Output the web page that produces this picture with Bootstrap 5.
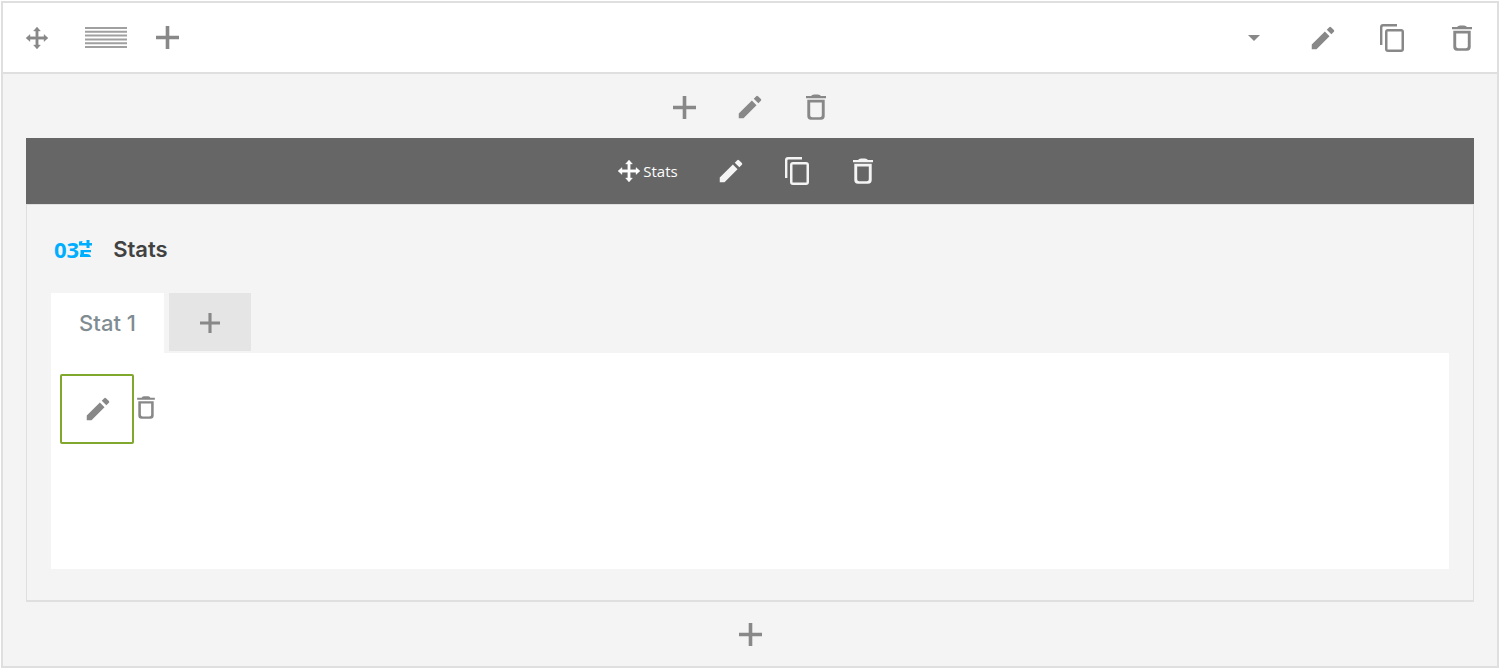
<!DOCTYPE html>
<html lang="en">
<head>
<meta charset="utf-8">
<meta name="viewport" content="width=device-width, initial-scale=1">
<title>Stats module</title>
<link href="https://cdn.jsdelivr.net/npm/bootstrap@5.3.0/dist/css/bootstrap.min.css" rel="stylesheet">
<style>
  body { background: #fff; font-family: Inter, "Liberation Sans", sans-serif; font-size: 22px; }
  .builder-row { margin: 1px; border: 2px solid #dfdfdf; background: #f4f4f4; color: #888; }
  .row-bar { height: 71px; border-bottom: 2px solid #dfdfdf; background: #fff; }
  .tool { display: flex; align-items: center; justify-content: center; width: 66px; height: 64px;
          padding: 0; border: 0; background: none; color: inherit; }
  .tool svg { display: block; fill: currentColor; }
  .tool-move { width: 68px; }
  .tool-end { width: 70px; }
  .tool-add { width: 52px; }
  .column-body { padding: 0 23px; }
  .column-tools { height: 64px; padding-top: 2px; }
  .module-bar { height: 66px; background: #666; color: #f4f4f4; }
  .module-name { width: 93px; gap: 3px; padding-right: 6px; font: 500 15px/20px "Open Sans", sans-serif; color: #fff; }
  .module-box { padding: 21px 24px 31px; border: 2px solid #dfdfdf; border-top-width: 1px; border-left-width: 1px; border-right-width: 1px; }
  .module-head { height: 46px; padding-left: 3px; gap: 21px; margin-bottom: 21px; }
  .module-title { font-size: 22px; line-height: 28px; font-weight: 600; color: #414141; }
  .digits { font: 700 22px/28px "Open Sans", sans-serif; color: #00aeff; }
  .stat-tabs { gap: 5px; }
  .stat-tab { height: 60px; width: 113px; padding: 0; border: 0; background: #fff; color: #7f8c92; font-weight: 500; line-height: 28px; }
  .stat-add { height: 58px; width: 82px; padding-top: 2px; background: #e5e5e5; }
  .stat-panel { min-height: 216px; padding: 21px 9px; background: #fff; }
  .edit-box { width: 74px; height: 70px; padding-left: 2px; border: 2px solid #80a82c; border-radius: 2px; }
  .panel-trash { width: 24px; height: 66px; }
</style>
<script src="https://cdn.jsdelivr.net/npm/bootstrap@5.3.0/dist/js/bootstrap.bundle.min.js"></script>
</head>
<body>
<svg class="d-none" aria-hidden="true">
  <symbol id="move" viewBox="0 0 22 22"><path d="M9.800 4H7.600L11 0l3.400 4h-2.200v5.800H18V7.600l4 3.400-4 3.400v-2.200h-5.800V18h2.200L11 22l-3.400-4h2.200v-5.800H4v2.200L0 11l4-3.400v2.200h5.800z" stroke="currentColor" stroke-width=".4"/></symbol>
  <symbol id="plus" viewBox="0 0 23 23"><path d="M9.700 0h3.600v9.700H23v3.600h-9.700V23H9.700v-9.700H0V9.700h9.700z"/></symbol>
  <symbol id="pencil" viewBox="0 0 24 24"><path d="M3 17.200V21h3.800L17.200 10.500l-3.700-3.700zM20.700 7a1 1 0 0 0 0-1.400l-2.300-2.300a1 1 0 0 0-1.400 0l-2 2 3.700 3.700z"/></symbol>
  <symbol id="copy" viewBox="0 0 24 28"><path d="M17 0H3a3 3 0 0 0-3 3v18h2.400V3.400q0-1 1-1H17z"/><path fill-rule="evenodd" d="M8 5h13a3 3 0 0 1 3 3v17a3 3 0 0 1-3 3H8a3 3 0 0 1-3-3V8a3 3 0 0 1 3-3zM7.500 7.500v18h14v-18z"/></symbol>
  <symbol id="trash" viewBox="0 0 20 26"><path d="M0 2h5q1-1.600 3-1.600h4q2 0 3 1.600h5v2.300H0z"/><path fill-rule="evenodd" d="M1.300 5.800h17.400V22q0 3.700-3.700 3.700H5q-3.700 0-3.700-3.700zM4.200 8.600v12.600q0 2 2 2h7.600q2 0 2-2V8.600z"/></symbol>
</svg>

<main class="builder-row">
  <header class="row-bar d-flex align-items-center">
    <button class="tool tool-move" type="button" aria-label="Move row"><svg width="22" height="22"><use href="#move"/></svg></button>
    <button class="tool tool-end" type="button" aria-label="Column layout">
      <svg width="42" height="21" viewBox="0 0 42 21" stroke="#a0a0a0" stroke-width="2"><path d="M0 1h42M0 4.800h42M0 8.600h42M0 12.400h42M0 16.200h42M0 20h42"/></svg>
    </button>
    <button class="tool tool-add" type="button" aria-label="Add column"><svg width="23" height="23"><use href="#plus"/></svg></button>
    <div class="d-flex ms-auto">
      <button class="tool tool-end" type="button" aria-label="More options"><svg width="12" height="6" viewBox="0 0 12 6"><path d="M0 0h12L6 6z"/></svg></button>
      <button class="tool tool-move" type="button" aria-label="Edit row"><svg width="30" height="30"><use href="#pencil"/></svg></button>
      <button class="tool tool-end" type="button" aria-label="Copy row"><svg width="24" height="28"><use href="#copy"/></svg></button>
      <button class="tool tool-end" type="button" aria-label="Delete row"><svg width="20" height="26"><use href="#trash"/></svg></button>
    </div>
  </header>

  <section class="column-body">
    <div class="column-tools d-flex justify-content-center align-items-center">
      <button class="tool" type="button" aria-label="Add module"><svg width="23" height="23"><use href="#plus"/></svg></button>
      <button class="tool" type="button" aria-label="Edit column"><svg width="30" height="30"><use href="#pencil"/></svg></button>
      <button class="tool" type="button" aria-label="Delete column"><svg width="20" height="26"><use href="#trash"/></svg></button>
    </div>

    <article>
      <div class="module-bar d-flex justify-content-center align-items-center">
        <button class="tool module-name" type="button"><svg width="22" height="22"><use href="#move"/></svg>Stats</button>
        <button class="tool" type="button" aria-label="Edit module"><svg width="30" height="30"><use href="#pencil"/></svg></button>
        <button class="tool" type="button" aria-label="Copy module"><svg width="24" height="28"><use href="#copy"/></svg></button>
        <button class="tool" type="button" aria-label="Delete module"><svg width="20" height="26"><use href="#trash"/></svg></button>
      </div>

      <div class="module-box">
        <div class="module-head d-flex align-items-center">
          <span class="digits d-flex align-items-center">03<svg width="13" height="18" viewBox="0 0 13 18" fill="currentColor"><path d="M0 1.500L3.500 1 3 3h4.500V0h3v3H13v2.500h-2.500V8h-3V5.500H0zM1.500 10H12v2.300H5v1.800h3q3.500 0 4 2.900H1v-2.500h.5z"/></svg></span>
          <h1 class="module-title mb-0">Stats</h1>
        </div>
        <div class="stat-tabs d-flex align-items-start" role="tablist">
          <button class="stat-tab" type="button" role="tab" aria-selected="true">Stat 1</button>
          <button class="tool stat-add" type="button" aria-label="Add stat"><svg width="20" height="20"><use href="#plus"/></svg></button>
        </div>
        <div class="stat-panel d-flex align-items-start" role="tabpanel">
          <button class="tool edit-box" type="button" aria-label="Edit stat"><svg width="30" height="30"><use href="#pencil"/></svg></button>
          <button class="tool panel-trash" type="button" aria-label="Delete stat"><svg width="18" height="23"><use href="#trash"/></svg></button>
        </div>
      </div>
    </article>

    <div class="d-flex justify-content-center">
      <button class="tool" type="button" aria-label="Add module below"><svg width="23" height="23"><use href="#plus"/></svg></button>
    </div>
  </section>
</main>
</body>
</html>
